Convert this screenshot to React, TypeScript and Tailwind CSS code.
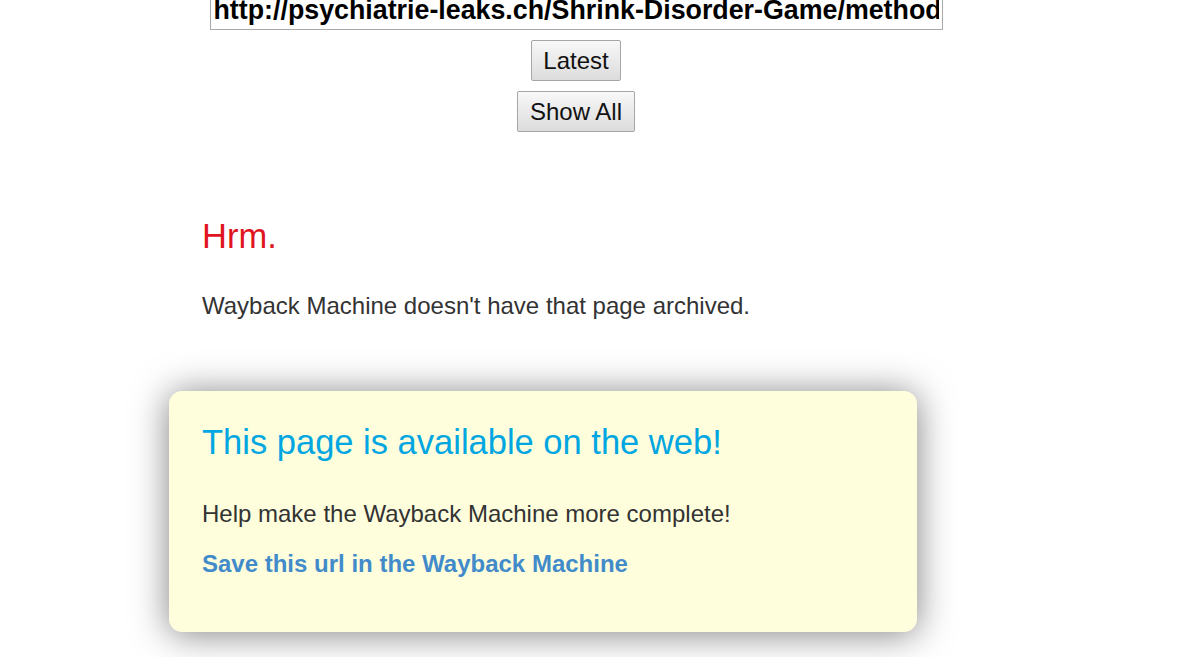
export default function App() {
  return (
    <div className="min-h-[657px] bg-white font-['Liberation_Sans',Arial,sans-serif] text-[#333] overflow-hidden">
      <div className="w-[1152px] flex flex-col items-center">
        <input
          readOnly
          value="http://psychiatrie-leaks.ch/Shrink-Disorder-Game/method"
          className="-mt-[10px] w-[733px] h-[40px] border border-[#a9a9a9] px-[3px] text-[26.8px] font-bold text-black outline-none"
        />
        <button className="mt-[10px] h-[41px] px-[11px] border border-[#a6a6a6] rounded-[2px] bg-gradient-to-b from-[#f8f8f8] to-[#dcdcdc] text-[24px] text-[#111]">
          Latest
        </button>
        <button className="mt-[10px] h-[41px] px-[12px] border border-[#a6a6a6] rounded-[2px] bg-gradient-to-b from-[#f8f8f8] to-[#dcdcdc] text-[24px] text-[#111]">
          Show All
        </button>
      </div>

      <div className="ml-[169px] w-[748px]">
        <div className="pl-[33px]">
          <h1 className="mt-[85px] text-[34.5px] leading-[38px] text-[#e0141e]">Hrm.</h1>
          <p className="mt-[34px] text-[24px] leading-[34px]">Wayback Machine doesn't have that page archived.</p>
        </div>

        <div className="mt-[68px] h-[241px] rounded-[13px] bg-[#fefedd] px-[33px] pt-[32px] shadow-[0_2px_36px_rgba(0,0,0,0.5)]">
          <h2 className="text-[34.5px] leading-[38px] text-[#00a6e1]">This page is available on the web!</h2>
          <p className="mt-[36px] text-[24px] leading-[34px]">Help make the Wayback Machine more complete!</p>
          <a href="#" className="mt-[16px] block text-[24px] leading-[34px] font-bold text-[#428bca]">
            Save this url in the Wayback Machine
          </a>
        </div>
      </div>
    </div>
  );
}
